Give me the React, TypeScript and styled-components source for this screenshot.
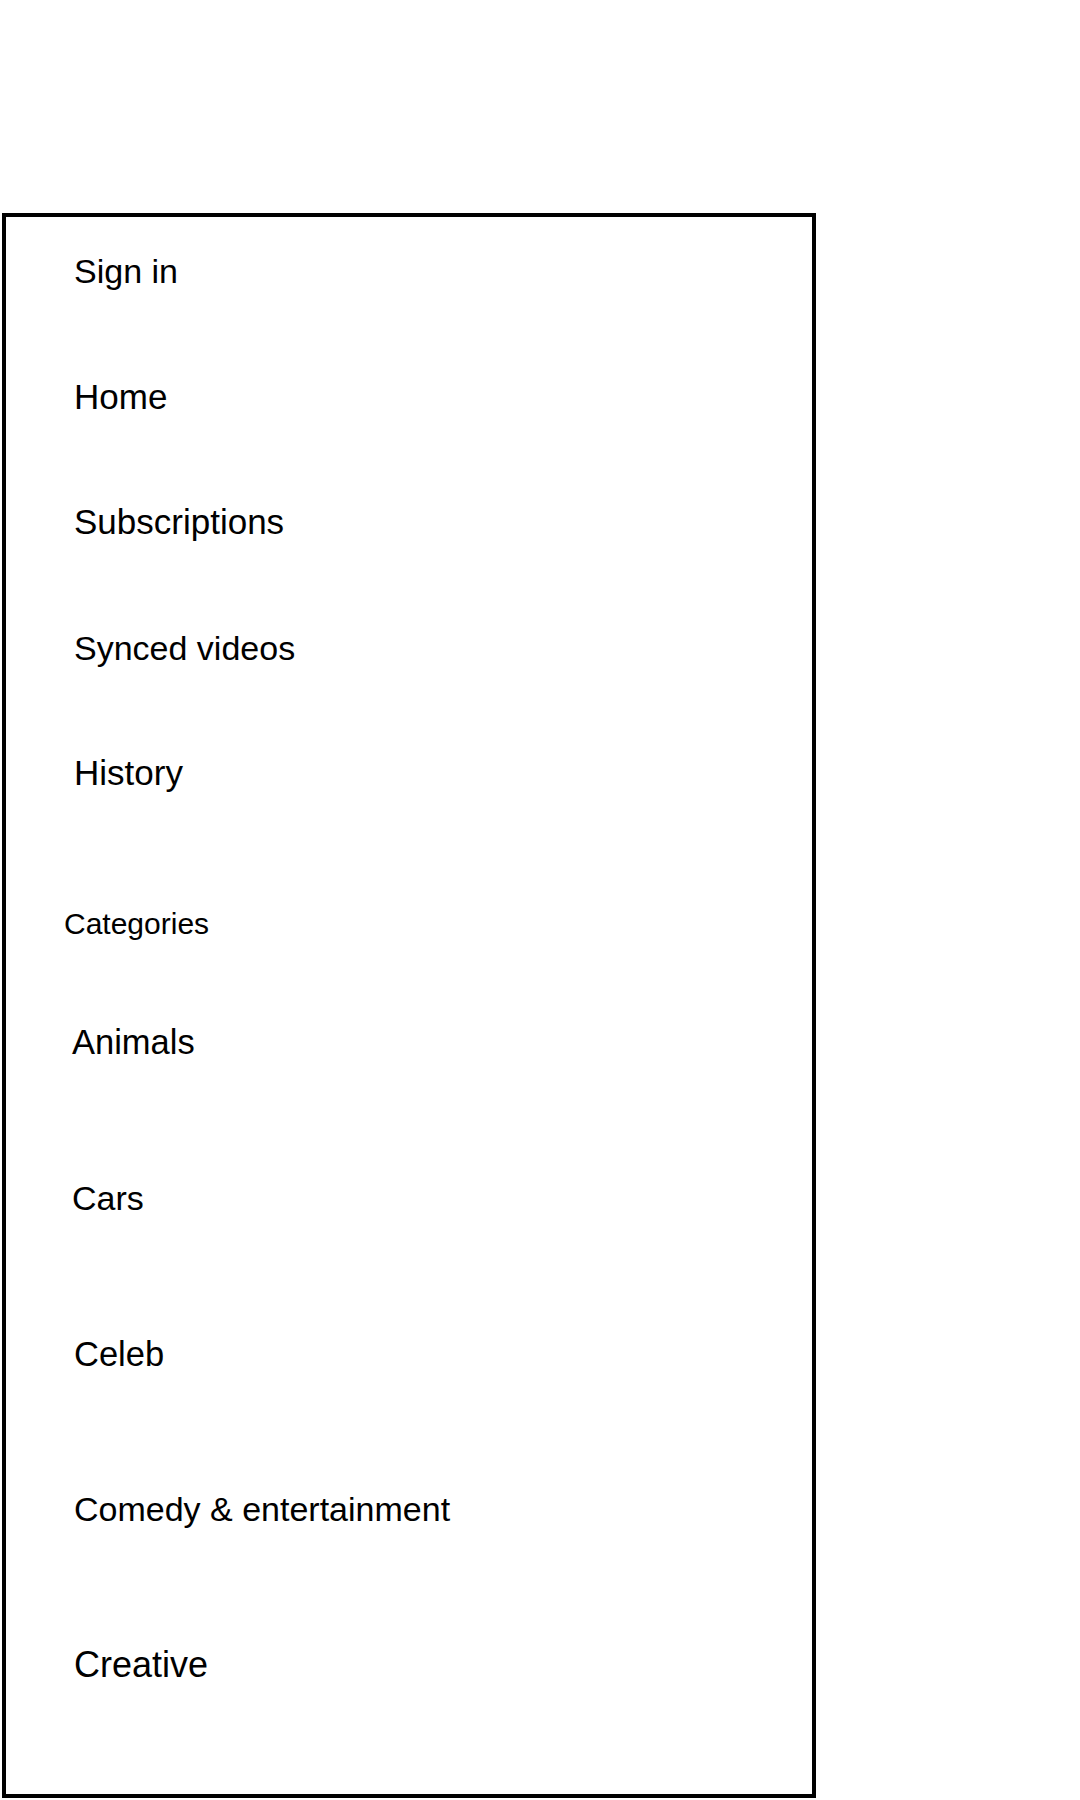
import React from "react";
import styled, { createGlobalStyle } from "styled-components";

const GlobalStyle = createGlobalStyle`
  html, body {
    margin: 0;
    padding: 0;
    background: #ffffff;
  }
  body {
    font-family: "Liberation Sans", Arial, sans-serif;
    color: #000000;
  }
`;

const Page = styled.div`
  padding: 213px 0 0 2px;
`;

const Sidebar = styled.nav`
  box-sizing: border-box;
  width: 814px;
  border: 4px solid #000000;
  background: #ffffff;
  padding: 34px 0 109px 0;
  display: flex;
  flex-direction: column;
`;

const List = styled.ul<{ $gap: number }>`
  list-style: none;
  margin: 0;
  padding: 0;
  display: flex;
  flex-direction: column;
  gap: ${(p) => p.$gap}px;
`;

const Item = styled.li<{ $size: number; $indent: number }>`
  font-size: ${(p) => p.$size}px;
  line-height: 40px;
  height: 40px;
  padding-left: ${(p) => p.$indent}px;
  white-space: nowrap;
`;

const SectionHeading = styled.h2`
  margin: 113px 0 80px 0;
  padding-left: 58px;
  font-size: 30px;
  line-height: 36px;
  font-weight: normal;
`;

type Entry = { label: string; size: number; indent: number };

const mainItems: Entry[] = [
  { label: "Sign in", size: 34, indent: 68 },
  { label: "Home", size: 35, indent: 68 },
  { label: "Subscriptions", size: 35, indent: 68 },
  { label: "Synced videos", size: 34, indent: 68 },
  { label: "History", size: 35, indent: 68 },
];

const categories: Entry[] = [
  { label: "Animals", size: 34.5, indent: 66 },
  { label: "Cars", size: 34, indent: 66 },
  { label: "Celeb", size: 34.5, indent: 68 },
  { label: "Comedy & entertainment", size: 34, indent: 68 },
  { label: "Creative", size: 36, indent: 68 },
];

export default function App() {
  return (
    <>
      <GlobalStyle />
      <Page>
        <Sidebar>
          <List $gap={85.5}>
            {mainItems.map((e) => (
              <Item key={e.label} $size={e.size} $indent={e.indent}>
                {e.label}
              </Item>
            ))}
          </List>
          <SectionHeading>Categories</SectionHeading>
          <List $gap={115.75}>
            {categories.map((e) => (
              <Item key={e.label} $size={e.size} $indent={e.indent}>
                {e.label}
              </Item>
            ))}
          </List>
        </Sidebar>
      </Page>
    </>
  );
}
